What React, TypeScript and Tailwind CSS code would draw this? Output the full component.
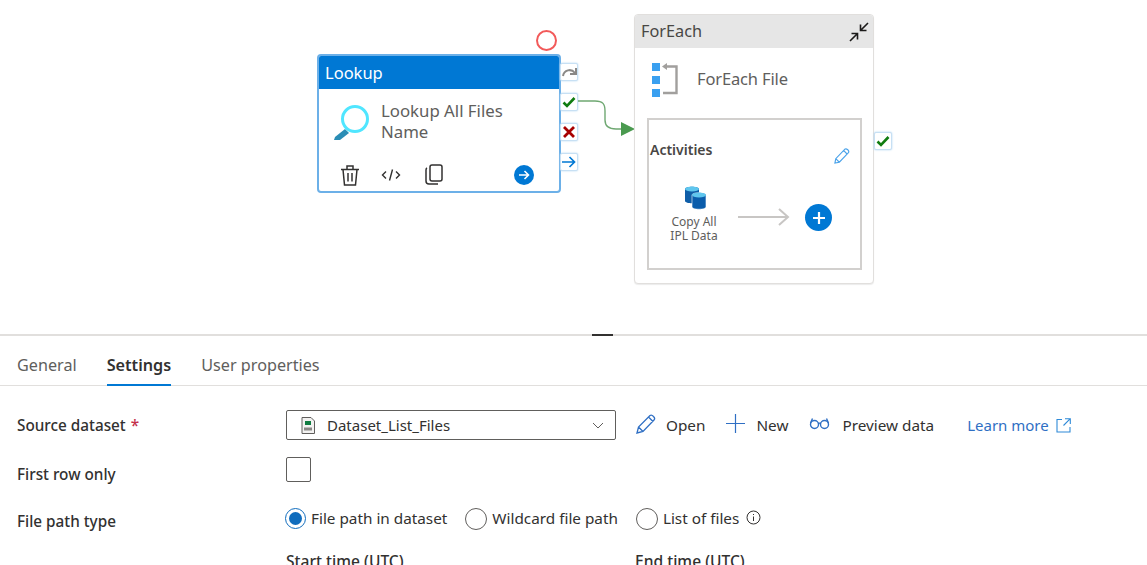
import React from "react";

const font = { fontFamily: '"Noto Sans", "Open Sans", sans-serif' };

function Port({ top, left, children }: { top: string; left: string; children: React.ReactNode }) {
  return (
    <div className={`absolute ${top} ${left} flex h-[18px] w-[18px] items-center justify-center rounded-[2px] border border-[#c7e0f4] bg-white shadow-[0_0_2px_#a9d0f0]`}>
      {children}
    </div>
  );
}

const Check = () => (
  <svg width="14" height="12" viewBox="0 0 14 12"><path d="M1.5 6.5 L5 10 L12.5 2" fill="none" stroke="#107c10" strokeWidth="2.6" /></svg>
);

function Radio({ checked, label }: { checked?: boolean; label: string }) {
  return (
    <label className="flex items-center gap-[5px]">
      <span className={`flex items-center justify-center rounded-full border ${checked ? "h-[21px] w-[21px] border-[#0f6cbd]" : "h-[22px] w-[22px] border-[#605e5c]"}`}>
        {checked && <span className="h-[13px] w-[13px] rounded-full bg-[#0f6cbd]" />}
      </span>
      <span>{label}</span>
    </label>
  );
}

export default function App() {
  return (
    <div className="h-[565px] w-[1147px] overflow-hidden bg-white text-[15.3px] text-[#323130]" style={font}>
      {/* Canvas */}
      <div className="relative h-[334px]">
        <div className="absolute left-[536px] top-[30px] h-[21px] w-[21px] rounded-full border-2 border-[#f25a5a]" />

        {/* Lookup node */}
        <div className="absolute left-[317px] top-[54px] flex h-[139px] w-[244px] flex-col overflow-hidden rounded-[4px] border-2 border-[#6cb0e8] bg-white">
          <div className="flex h-[33px] items-center bg-[#0078d4] pl-[6px] pt-[1px] text-[16.5px] text-white">Lookup</div>
          <div className="flex flex-1 flex-col">
            <div className="mt-[11px] flex gap-[9px] pl-[15px]">
              <svg width="38" height="38" viewBox="0 0 38 38" className="mt-[3px] shrink-0">
                <path d="M0 37 L1 34 L11 26 L15 30 L6 37 Z" fill="#2a8db5" />
                <circle cx="21" cy="16" r="12.5" fill="none" stroke="#50e6ff" strokeWidth="3" />
              </svg>
              <div className="text-[16.8px] leading-[21px] text-[#605e5c]">Lookup All Files<br />Name</div>
            </div>
            <div className="mb-[5px] mt-auto flex items-center pl-[22px] pr-[25px]">
              <svg width="18" height="21" viewBox="0 0 18 21" fill="none" stroke="#323130" strokeWidth="1.5">
                <path d="M0 4.5 H18 M6 4.5 V1 H12 V4.5 M2 4.5 L3.5 20 H14.5 L16 4.5 M7 8 V16.5 M11 8 V16.5" />
              </svg>
              <svg width="20" height="14" viewBox="0 0 20 14" fill="none" stroke="#323130" strokeWidth="1.4" className="ml-[22px]">
                <path d="M5 3.5 L1.5 7 L5 10.5 M15 3.5 L18.5 7 L15 10.5 M11.5 1.5 L8.5 12.5" />
              </svg>
              <svg width="20" height="22" viewBox="0 0 20 22" fill="none" stroke="#323130" strokeWidth="1.5" className="ml-[23px]">
                <rect x="6" y="1" width="12" height="16" rx="2" />
                <path d="M3 4 C2 4.5 2 5 2 6 V17 C2 19.5 3 20 5 20 H14" />
              </svg>
              <div className="ml-auto flex h-5 w-5 items-center justify-center rounded-full bg-[#0078d4]">
                <svg width="12" height="12" viewBox="0 0 12 12" fill="none" stroke="#fff" strokeWidth="1.6"><path d="M1 6 H10.5 M6.5 2 L10.5 6 L6.5 10" /></svg>
              </div>
            </div>
          </div>
        </div>

        <Port top="top-[63px]" left="left-[560px]">
          <svg width="15" height="11" viewBox="0 0 15 11" fill="none" stroke="#8a8886" strokeWidth="2"><path d="M1 9 C2 3 9 1 13 6 M14 1 V7 H8" /></svg>
        </Port>
        <Port top="top-[93px]" left="left-[560px]"><Check /></Port>
        <Port top="top-[123px]" left="left-[560px]">
          <svg width="12" height="12" viewBox="0 0 12 12" fill="none" stroke="#a80000" strokeWidth="2.8"><path d="M1 1 L11 11 M11 1 L1 11" /></svg>
        </Port>
        <Port top="top-[153px]" left="left-[560px]">
          <svg width="14" height="12" viewBox="0 0 14 12" fill="none" stroke="#0078d4" strokeWidth="1.7"><path d="M0 6 H12 M7.5 1 L12.5 6 L7.5 11" /></svg>
        </Port>

        {/* Connector */}
        <svg className="absolute left-[578px] top-[95px]" width="60" height="45" viewBox="0 0 60 45" fill="none">
          <path d="M0 6 H17 C25 6 27 9 27 16 V25 C27 31 30 34 38 34 H44" stroke="#6fa872" strokeWidth="1.4" />
          <path d="M43 27 L57 34 L43 41 Z" fill="#4a9a4f" />
        </svg>

        {/* ForEach node */}
        <div className="absolute left-[634px] top-[14px] flex h-[270px] w-[240px] flex-col overflow-hidden rounded-[4px] border border-[#e1dfdd] bg-white shadow-[0_1px_1px_rgba(0,0,0,0.08)]">
          <div className="flex h-[33px] shrink-0 items-center justify-between bg-[#e6e6e6] pl-[6px] pr-[3px] text-[16.3px] text-[#484644]">
            <span>ForEach</span>
            <svg width="22" height="22" viewBox="0 0 22 22" fill="none" stroke="#1b1a19" strokeWidth="1.6">
              <path d="M2 20 L9 13 M3.5 12.5 H9.5 V18.5 M20 2 L13 9 M12.5 3.5 V9.5 H18.5" />
            </svg>
          </div>
          <div className="flex h-[70px] shrink-0 items-start gap-[19px] pl-[17px] pt-[15px]">
            <svg width="26" height="34" viewBox="0 0 26 34">
              <rect x="0" y="0" width="8" height="8" fill="#3aa0f0" />
              <rect x="0" y="13" width="8" height="8" fill="#3aa0f0" />
              <rect x="0" y="26" width="8" height="8" fill="#3aa0f0" />
              <path d="M13 3.5 H24.5 V30 H11" fill="none" stroke="#a19f9d" strokeWidth="2.4" />
              <path d="M15 0 L10 3.5 L15 7 Z" fill="#a19f9d" />
            </svg>
            <span className="-mt-[1px] text-[16.5px] leading-[34px] tracking-[-0.15px] text-[#605e5c]">ForEach File</span>
          </div>
          <div className="relative ml-[12px] mr-[11px] h-[152px] border-2 border-[#d2d0ce]">
            <div className="pl-[1px] pt-[20px] text-[14px] font-semibold leading-[19px] text-[#484644]">Activities</div>
            <svg className="absolute right-[10px] top-[28px]" width="16" height="16" viewBox="0 0 18 18" fill="none" stroke="#4ba3ea" strokeWidth="1.3">
              <path d="M1 17 L2 12 L12 1.5 C13 0.8 14 0.8 15.5 2 C17 3.5 17 4.5 16 5.5 L6 16 Z M2 12 L6 16 M11 3 L15 7" />
            </svg>
            <div className="absolute left-[17px] top-[66px] flex w-[56px] flex-col items-center">
              <svg width="22" height="24" viewBox="0 0 22 24" className="ml-[3px]">
                <path d="M0 3 C0 0 14 0 14 3 V15 C14 18 0 18 0 15 Z" fill="#0f5ea8" />
                <ellipse cx="7" cy="3" rx="7" ry="2.4" fill="#5fc6ee" />
                <path d="M7 9 C7 6 21 6 21 9 V21 C21 24 7 24 7 21 Z" fill="#0a5cab" stroke="#fff" strokeWidth=".6" />
                <ellipse cx="14" cy="9" rx="7" ry="2.4" fill="#5fc6ee" />
              </svg>
              <div className="mt-[5px] text-center text-[12px] leading-[14px] text-[#605e5c]">Copy All<br />IPL Data</div>
            </div>
            <svg className="absolute left-[88px] top-[87px]" width="54" height="20" viewBox="0 0 54 20" fill="none" stroke="#c8c6c4" strokeWidth="2">
              <path d="M1 10 H51 M42 2 L51 10 L42 18" />
            </svg>
            <div className="absolute left-[156px] top-[84px] flex h-[27px] w-[27px] items-center justify-center rounded-full bg-[#0078d4]">
              <svg width="12" height="12" viewBox="0 0 12 12" stroke="#fff" strokeWidth="2.2"><path d="M6 0 V12 M0 6 H12" /></svg>
            </div>
          </div>
        </div>

        <Port top="top-[132px]" left="left-[874px]"><Check /></Port>
      </div>

      {/* Splitter */}
      <div className="flex h-[2px] justify-center bg-[#e1dfdd] pl-[58px]">
        <div className="h-[2px] w-[21px] bg-[#323130]" />
      </div>

      {/* Tabs */}
      <div className="flex h-[50px] gap-[30px] border-b border-[#e1dfdd] pl-[17px] text-[16.2px] text-[#605e5c]">
        <div className="flex h-[50px] items-center pt-[8px]">General</div>
        <div className="flex h-[50px] items-center border-b-2 border-[#0078d4] pt-[10px] font-semibold text-[#323130]">Settings</div>
        <div className="flex h-[50px] items-center pt-[8px]">User properties</div>
      </div>

      {/* Form */}
      <div className="grid grid-cols-[269px_1fr] pl-[17px] pt-[24px]">
        <div className="flex h-[30px] items-center font-medium">Source dataset<span className="ml-[5px] text-[#c4314b]">*</span></div>
        <div className="flex h-[30px] items-center">
          <div className="flex h-[30px] w-[330px] items-center rounded-[2px] border border-[#605e5c] pl-[14px] pr-[11px]">
            <svg width="14" height="17" viewBox="0 0 14 17">
              <path d="M1 .5 H10 L13.5 4 V16.5 H1 Z" fill="#f3f2f1" stroke="#605e5c" />
              <rect x="4" y="4" width="6" height="4" fill="#107c41" />
              <rect x="3" y="10.5" width="8" height="3" fill="#8a8886" />
            </svg>
            <span className="ml-[12px] pt-[1px] text-[15px]">Dataset_List_Files</span>
            <svg className="ml-auto" width="12" height="7" viewBox="0 0 12 7" fill="none" stroke="#605e5c"><path d="M1 1 L6 6 L11 1" /></svg>
          </div>
          <div className="ml-[20px] flex items-center gap-[10px]">
            <svg width="20" height="20" viewBox="0 0 20 20" fill="none" stroke="#2f6fc4" strokeWidth="1.3" className="-mt-[2px]">
              <path d="M1 19 L2.5 13 L14 1.5 C15 .8 16 .8 17.5 2.5 C19 4 19 5 18 6 L7 17.5 Z M2.5 13 L7 17.5 M12.5 3 L17 7.5" />
            </svg>
            <span className="pt-[1px]">Open</span>
          </div>
          <div className="ml-[21px] flex items-center gap-[11px]">
            <svg width="19" height="19" viewBox="0 0 19 19" stroke="#2f6fc4" strokeWidth="1.2" className="-mt-[3px]"><path d="M9.5 0 V19 M0 9.5 H19" /></svg>
            <span className="pt-[1px]">New</span>
          </div>
          <div className="ml-[21px] flex items-center gap-[12px]">
            <svg width="21" height="13" viewBox="0 0 21 13" fill="none" stroke="#2f6fc4" strokeWidth="1.4" className="-mt-[3px]">
              <circle cx="5.5" cy="7.5" r="4" /><circle cx="15.5" cy="7.5" r="4" />
              <path d="M9 6.5 C10 6 11 6 12 6.5 M1.5 6 L3.5 1.5 M19.5 6 L17.5 1.5" />
            </svg>
            <span className="pt-[1px]">Preview data</span>
          </div>
          <div className="ml-[33px] flex items-center gap-[7px] text-[15px] text-[#2f6fc4]">
            <span className="pt-[1px]">Learn more</span>
            <svg width="15" height="15" viewBox="0 0 15 15" fill="none" stroke="#2f8ad8" strokeWidth="1.1"><path d="M6 1.5 H1 V14 H14 V9 M9 .7 H14.3 V6 M14.3 .7 L7.5 7.5" /></svg>
          </div>
        </div>

        <div className="mt-[23px] flex h-[22px] items-center font-medium">First row only</div>
        <div className="mt-[17px]"><div className="h-[25px] w-[25px] rounded-[2px] border border-[#605e5c]" /></div>

        <div className="mt-[24px] flex h-[24px] items-center font-medium">File path type</div>
        <div className="-ml-[1px] mt-[21px] flex h-[25px] items-center gap-[18px]">
          <Radio checked label="File path in dataset" />
          <Radio label="Wildcard file path" />
          <div className="flex items-center gap-[7px]">
            <Radio label="List of files" />
            <svg width="15" height="15" viewBox="0 0 15 15" fill="none" stroke="#323130" className="-mt-[3px]">
              <circle cx="7.5" cy="7.5" r="6.5" /><path d="M7.5 6.5 V11 M7.5 4 V5" />
            </svg>
          </div>
        </div>

        <div />
        <div className="mt-[17px] flex text-[15.6px] font-medium">
          <span className="w-[349px]">Start time (UTC)</span>
          <span>End time (UTC)</span>
        </div>
      </div>
    </div>
  );
}
